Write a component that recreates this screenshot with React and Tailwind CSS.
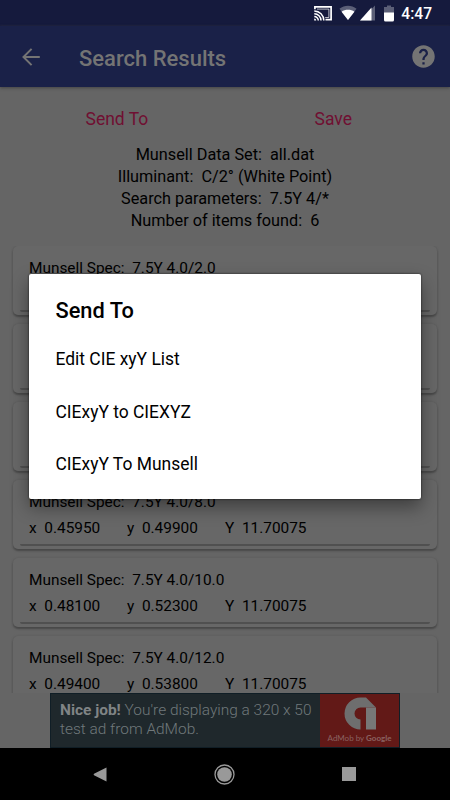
import { MdHelp } from 'react-icons/md'

const summary = [
  'Munsell Data Set:  all.dat',
  'Illuminant:  C/2° (White Point)',
  'Search parameters:  7.5Y 4/*',
  'Number of items found:  6',
]

const results = [
  { spec: '7.5Y 4.0/2.0' },
  { spec: '' },
  { spec: '' },
  { spec: '7.5Y 4.0/8.0', x: '0.45950', y: '0.49900', Y: '11.70075' },
  { spec: '7.5Y 4.0/10.0', x: '0.48100', y: '0.52300', Y: '11.70075' },
  { spec: '7.5Y 4.0/12.0', x: '0.49400', y: '0.53800', Y: '11.70075' },
]

const options = ['Edit CIE xyY List', 'CIExyY to CIEXYZ', 'CIExyY To Munsell']

function StatusBar() {
  return (
    <div className="flex h-[26px] shrink-0 items-center justify-end bg-[#151a3d] pr-[18px] text-white">
      {/* cast */}
      <svg className="mr-[7px] h-[15px] w-[18px]" viewBox="0 0 18 15" fill="none" stroke="#fff">
        <path d="M0.900 3.200V0.900H17.100V13.600H11.500" strokeWidth="1.700" />
        <path d="M3 3.100H14.900V11.500H11.200" strokeWidth="0.700" />
        <path d="M0.300 5A9.500 9.500 0 0 1 9.800 14.500M0.300 7.800A6.700 6.700 0 0 1 7 14.500M0.300 10.500A4 4 0 0 1 4.300 14.500" strokeWidth="1.500" />
        <path d="M0.200 12.500A2 2 0 0 1 2.200 14.500H0.200Z" fill="#fff" stroke="none" />
      </svg>
      <svg className="mr-[3px] h-[16px] w-[18px]" viewBox="0 0 19 16">
        <path d="M0.5 3.6C5.8-0.6 13.2-0.6 18.5 3.6L9.5 15.5Z" fill="#5b5f77" />
        <path d="M2.7 6.600C6.500 4 12.500 4 16.300 6.600L9.5 15.5Z" fill="#fff" />
      </svg>
      <svg className="mr-[9px] h-[16px] w-[15px]" viewBox="0 0 15 16">
        <path d="M0 15.500L15 0.500V15.500Z" fill="#5b5f77" />
        <path d="M0 15.500L11.500 2.500V15.500Z" fill="#fff" />
      </svg>
      <svg className="mr-[7px] h-[17px] w-[10px]" viewBox="0 0 10 17">
        <path d="M3 0.5H7V2H10V8H0V2H3Z" fill="#5b5f77" />
        <path d="M0 7.500H10V15Q10 16.500 8.500 16.500H1.500Q0 16.500 0 15Z" fill="#fff" />
      </svg>
      <span className="pt-[4px] text-[15.6px] font-medium leading-none">4:47</span>
    </div>
  )
}

function ResultCard({ item }) {
  return (
    <div className="h-[69px] shrink-0 rounded-[5px] bg-[#676767] px-[7px] pb-[3px] shadow-[0_2px_2px_#484848,0_0_2px_#595959]">
      <div className="h-[66px] rounded-[2px] border-b-2 border-[#505050] px-[9px] pt-[11px] text-[15.4px] leading-[22px]">
        <p className="h-[22px] whitespace-pre">{item.spec && 'Munsell Spec:  ' + item.spec}</p>
        {item.x && (
          <div className="mt-[4px] flex whitespace-pre">
            <span className="w-[98px]">{'x  ' + item.x}</span>
            <span className="w-[98px]">{'y  ' + item.y}</span>
            <span>{'Y  ' + item.Y}</span>
          </div>
        )}
      </div>
    </div>
  )
}

function AdBanner() {
  return (
    <div className="mx-auto flex h-[55px] w-[350px] shrink-0 border border-[#101e26] bg-[#1f282c]">
      <p className="w-[269px] whitespace-nowrap pl-[9px] pt-[7px] text-[15.45px] font-light leading-[18.5px] text-[#70787b]">
        <b className="font-bold text-[#808485]">Nice job!</b> You're displaying a 320 x 50
        <br />
        test ad from AdMob.
      </p>
      <div className="flex flex-1 flex-col items-center bg-[#621917] pt-[3px]">
        <svg className="h-[33px] w-[32px]" viewBox="0 0 32 33">
          <path d="M16.500 0.500H22L32 10.500H16.500A6 6 0 0 0 16.500 22.500V32.500A16 16 0 0 1 16.500 0.500Z" fill="#6e6e6e" />
          <path d="M22 10.500H32V32.500H22Z" fill="#777" />
        </svg>
        <span className="mt-[3px] whitespace-nowrap font-[Lato] text-[8px] leading-[10px] text-[#8a6261]">
          AdMob by <b>Google</b>
        </span>
      </div>
    </div>
  )
}

function NavBar() {
  return (
    <div className="flex h-[52px] shrink-0 items-center justify-between bg-black pl-[93px] pr-[94px]">
      <svg className="h-[15px] w-[14px]" viewBox="0 0 14 15">
        <path d="M13.500 0.500V14.500L1 8.200Q0.200 7.500 1 6.800Z" fill="#999" />
      </svg>
      <svg className="h-[21px] w-[21px]" viewBox="0 0 21 21">
        <circle cx="10.500" cy="10.500" r="9.500" fill="none" stroke="#999" strokeWidth="1.300" />
        <circle cx="10.500" cy="10.500" r="7.300" fill="#999" />
      </svg>
      <div className="h-[14px] w-[14px] bg-[#999]" />
    </div>
  )
}

function SendToDialog() {
  return (
    <div className="absolute left-[29px] top-[274px] h-[225px] w-[392px] rounded-[2px] bg-white px-[26.5px] pt-[23px] text-black shadow-[0_8px_18px_rgba(0,0,0,0.4),0_0_2px_#111]">
      <h2 className="text-[21.8px] font-medium leading-[28px]">Send To</h2>
      <ul className="mt-[8px] text-[17.45px]">
        {options.map(o => (
          <li key={o} className="flex h-[52.5px] items-center">{o}</li>
        ))}
      </ul>
    </div>
  )
}

export default function App() {
  return (
    <div className="relative flex h-[800px] w-[450px] flex-col overflow-hidden bg-[#656565] font-[Roboto,sans-serif] text-black">
      <StatusBar />
      <header className="flex h-[61px] shrink-0 items-center bg-[#1a2148] pl-[22px] pr-[13px] text-[#747474] shadow-[0_1px_3px_#444]">
        <svg className="h-[18px] w-[18px]" viewBox="0 0 18 18" fill="none" stroke="currentColor" strokeWidth="2">
          <path d="M17.800 9H1.500M9.600 0.900L1.500 9L9.600 17.100" />
        </svg>
        <h1 className="ml-[39px] flex-1 pt-[3px] text-[22px] font-medium">Search Results</h1>
        <MdHelp className="h-[27px] w-[27px]" />
      </header>

      <div className="flex h-[57px] shrink-0 items-center justify-between pl-[85.5px] pr-[98px] pt-[8px] text-[17.5px] text-[#700f32]">
        <button>Send To</button>
        <button>Save</button>
      </div>
      <div className="h-[102px] shrink-0 text-center text-[16.25px] leading-[22px]">
        {summary.map(line => (
          <p key={line} className="whitespace-pre">{line}</p>
        ))}
      </div>

      <div className="flex min-h-0 flex-1 flex-col gap-[9px] overflow-hidden px-[13px]">
        {results.map((item, i) => (
          <ResultCard key={i} item={item} />
        ))}
      </div>

      <AdBanner />
      <NavBar />
      <SendToDialog />
    </div>
  )
}
